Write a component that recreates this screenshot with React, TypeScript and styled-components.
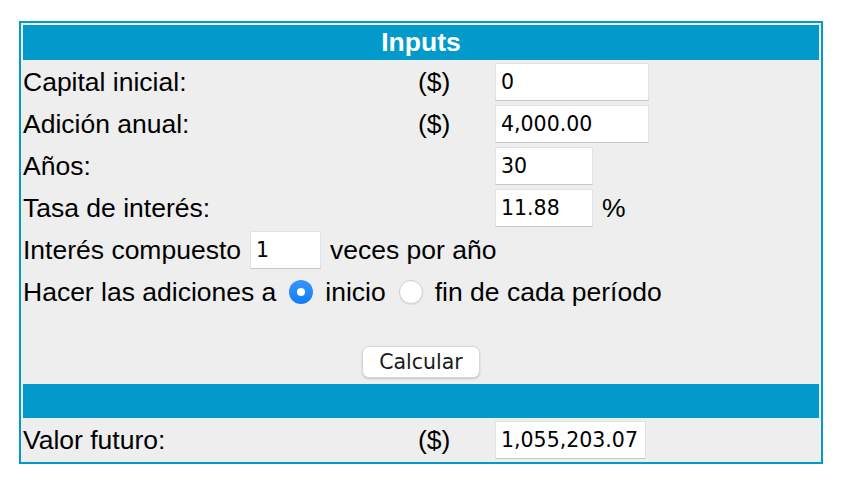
import styled, { createGlobalStyle } from "styled-components";

const GlobalStyle = createGlobalStyle`
  body {
    margin: 0;
    background: #ffffff;
    font-family: "Liberation Sans", Arial, Helvetica, sans-serif;
  }
`;

const Page = styled.div`
  padding: 21px 0 0 19px;
`;

const Frame = styled.form`
  width: 796px;
  border: 2px solid #019acb;
  padding: 2px;
  background: #eeeeee;
  display: flex;
  flex-direction: column;
  gap: 2px;
  box-sizing: content-box;
  color: #000;
`;

const Bar = styled.div<{ $h: number }>`
  height: ${(p) => p.$h}px;
  background: #019acb;
  color: #ffffff;
  font-weight: bold;
  font-size: 26.5px;
  display: flex;
  align-items: center;
  justify-content: center;
`;

const FieldRow = styled.div`
  display: grid;
  grid-template-columns: 395px 77px 1fr;
  align-items: center;
  height: 40px;
  font-size: 26.5px;
`;

const Label = styled.span`
  white-space: nowrap;
`;

const ValueCell = styled.div`
  display: flex;
  align-items: center;
  gap: 9px;
`;

const TextBox = styled.input<{ $w: number }>`
  width: ${(p) => p.$w}px;
  height: 38px;
  box-sizing: border-box;
  margin: 0;
  padding: 0 5px;
  border: 1px solid #e2e2e2;
  border-bottom-color: #c6c6c6;
  background: #ffffff;
  font-family: "DejaVu Sans", "Lucida Grande", sans-serif;
  font-size: 20.5px;
  color: #000;
  outline: none;
`;

const InlineRow = styled.div<{ $gap: number }>`
  display: flex;
  align-items: center;
  gap: ${(p) => p.$gap}px;
  height: 40px;
  font-size: 26.5px;
  white-space: nowrap;
`;

const Radio = styled.input`
  appearance: none;
  -webkit-appearance: none;
  width: 24px;
  height: 24px;
  margin: 0 5px 0 6px;
  border-radius: 50%;
  box-sizing: border-box;
  border: 1px solid #cfcfcf;
  background: #ffffff;
  box-shadow: 0 1px 1px rgba(0, 0, 0, 0.08);
  position: relative;

  &:checked {
    border: none;
    background: linear-gradient(#3a95fb, #137cf8);
    box-shadow: none;
  }

  &:checked::after {
    content: "";
    position: absolute;
    left: 8px;
    top: 8px;
    width: 8px;
    height: 8px;
    border-radius: 50%;
    background: #ffffff;
  }
`;

const ButtonArea = styled.div`
  height: 68px;
  box-sizing: border-box;
  padding: 32px 0 4px;
  display: flex;
  justify-content: center;
`;

const Button = styled.button`
  width: 118px;
  height: 32px;
  border: 1px solid #d6d6d6;
  border-radius: 7px;
  background: #ffffff;
  box-shadow: 0 1px 2px rgba(0, 0, 0, 0.18);
  font-family: "DejaVu Sans", "Lucida Grande", sans-serif;
  font-size: 20.5px;
  color: #1a1a1a;
  padding: 0;
`;

type Field = { label: string; unit?: string; value: string; width: number; suffix?: string };

const fields: Field[] = [
  { label: "Capital inicial:", unit: "($)", value: "0", width: 154 },
  { label: "Adición anual:", unit: "($)", value: "4,000.00", width: 154 },
  { label: "Años:", value: "30", width: 98 },
  { label: "Tasa de interés:", value: "11.88", width: 98, suffix: "%" },
];

const App = () => {
  return (
    <Page>
      <GlobalStyle />
      <Frame onSubmit={(e) => e.preventDefault()}>
        <Bar $h={35}>Inputs</Bar>
        {fields.map((f) => (
          <FieldRow key={f.label}>
            <Label>{f.label}</Label>
            <span>{f.unit}</span>
            <ValueCell>
              <TextBox $w={f.width} defaultValue={f.value} />
              {f.suffix && <span>{f.suffix}</span>}
            </ValueCell>
          </FieldRow>
        ))}
        <InlineRow $gap={9}>
          <span>Interés compuesto</span>
          <TextBox $w={71} defaultValue="1" />
          <span>veces por año</span>
        </InlineRow>
        <InlineRow $gap={7}>
          <span>Hacer las adiciones a</span>
          <Radio type="radio" name="when" defaultChecked />
          <span>inicio</span>
          <Radio type="radio" name="when" />
          <span>fin de cada período</span>
        </InlineRow>
        <ButtonArea>
          <Button type="submit">Calcular</Button>
        </ButtonArea>
        <Bar $h={34} />
        <FieldRow>
          <Label>Valor futuro:</Label>
          <span>($)</span>
          <ValueCell>
            <TextBox $w={151} defaultValue="1,055,203.07" readOnly />
          </ValueCell>
        </FieldRow>
      </Frame>
    </Page>
  );
};

export default App;
